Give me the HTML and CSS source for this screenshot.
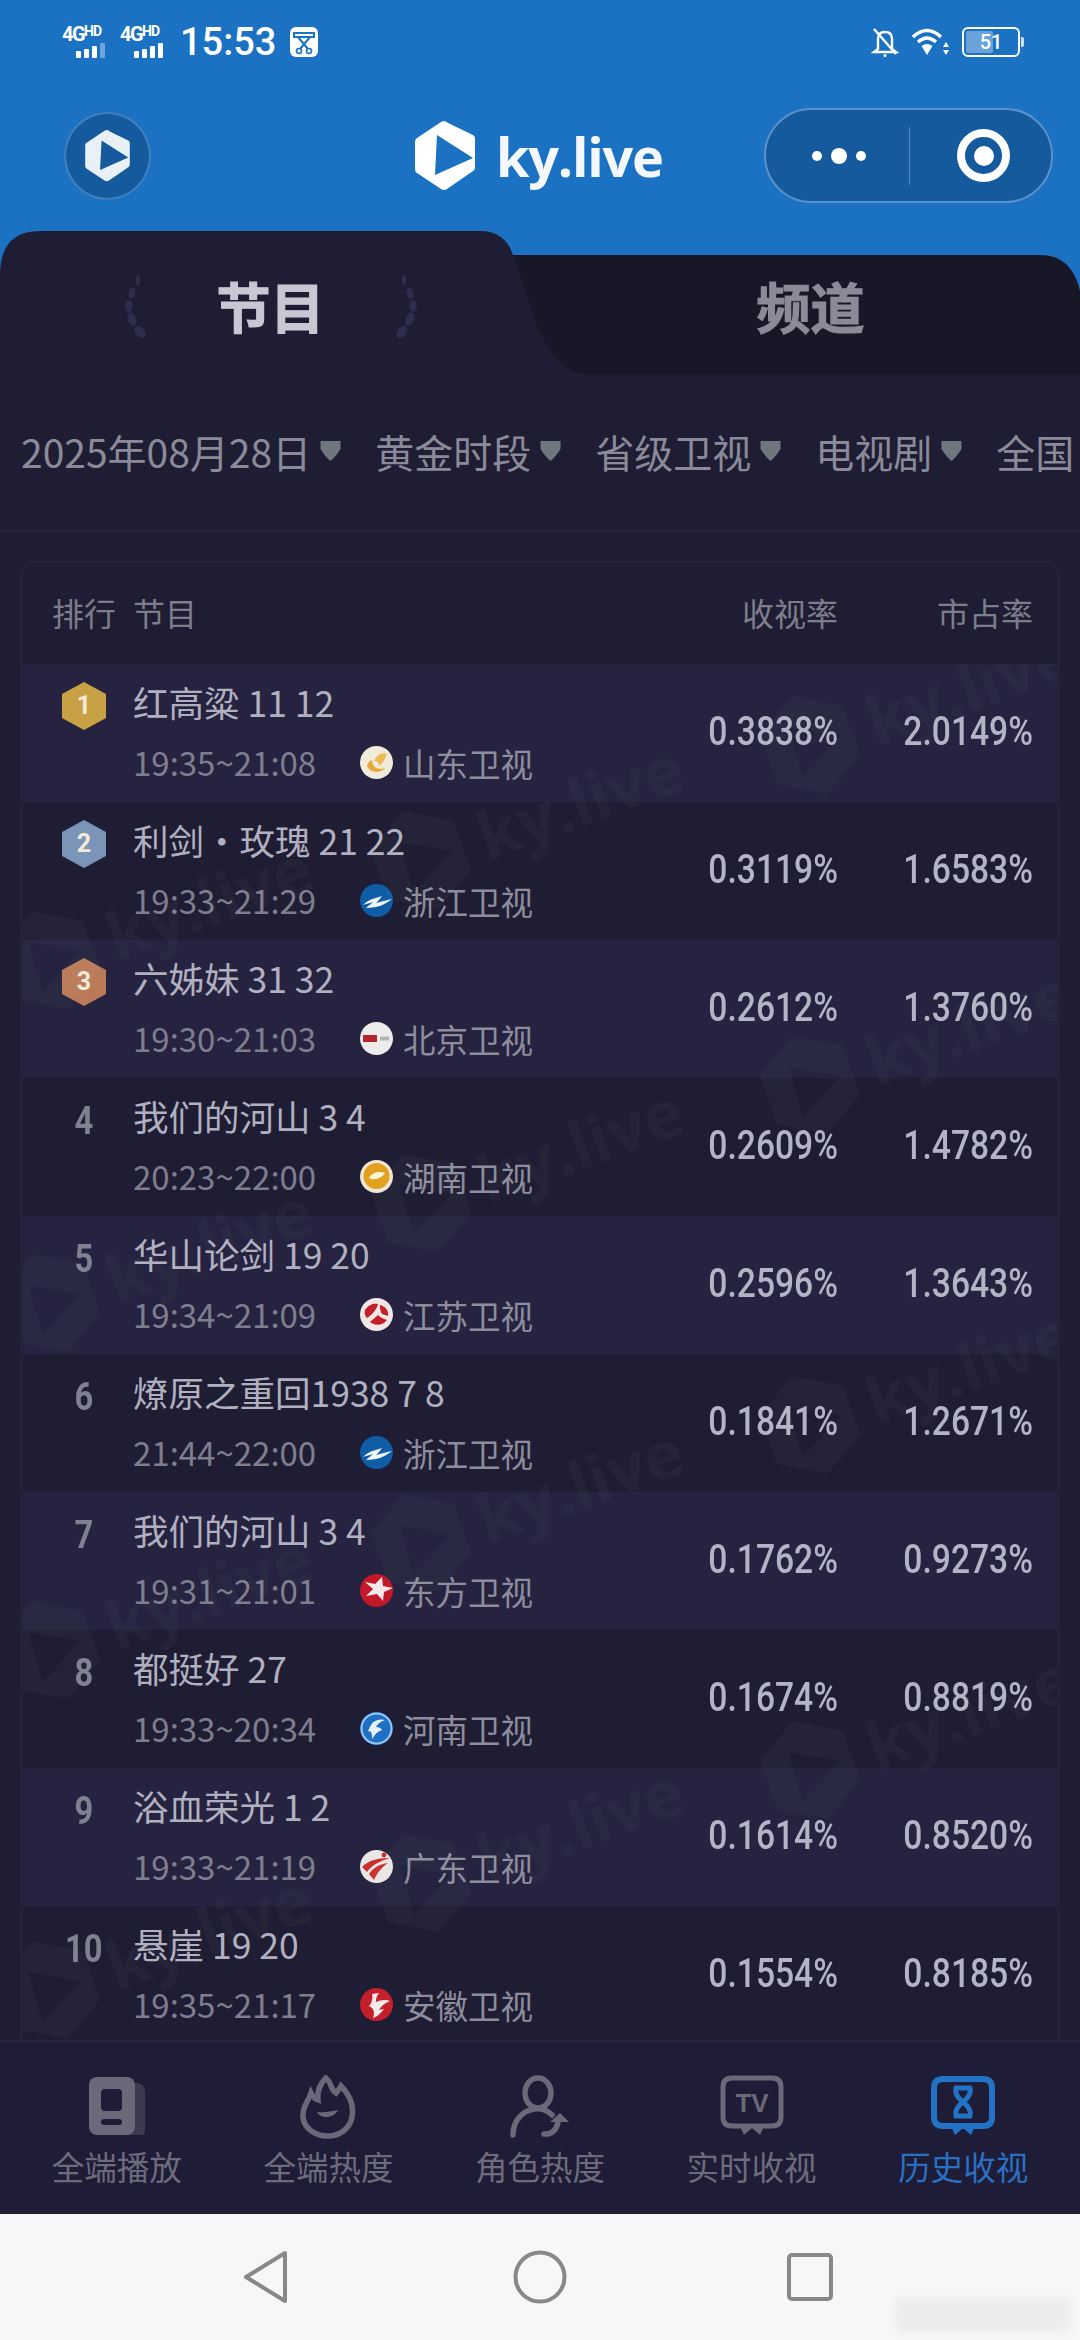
FILE: index.html
```html
<!DOCTYPE html>
<html lang="zh-CN">
<head>
<meta charset="utf-8">
<title>ky.live</title>
<link rel="stylesheet" href="styles.css">
</head>
<body>
<svg class="defs" width="0" height="0">
  <defs>
    <symbol id="hexlogo" viewBox="0 0 60 70">
      <path fill-rule="evenodd" d="M29 0Q31 0 33 2L58 14Q60 15 60 18V46Q60 49 58 50L32 68Q29 70 26 68L2 52Q0 51 0 48V21Q0 18 2 17L26 1Q28 0 29 0ZM22 14L20 54L58 37Z"/>
    </symbol>
    <symbol id="shandong" viewBox="0 0 33 33"><circle cx="16.5" cy="16.5" r="16.5" fill="#f1ebdc"/><path d="M7 20C10 27 20 28 25 22C19 24 13 23 12 14C10 15 7 17 7 20Z" fill="#e9a93a"/><path d="M14 15C17 8 23 6 27 8C25 12 24 17 19 20C19 16 17 15 14 15Z" fill="#eebc55"/></symbol>
    <symbol id="zhejiang" viewBox="0 0 33 33"><circle cx="16.5" cy="16.5" r="16.5" fill="#0f5da6"/><path d="M3 21C9 15 16 14 22 12C20 15 18 17 16 19C21 18 26 16 32 15C26 20 18 24 6 24C9 21 11 20 13 18C10 19 6 20 3 21Z" fill="#eef5fb"/></symbol>
    <symbol id="beijing" viewBox="0 0 33 33"><circle cx="16.5" cy="16.5" r="16.5" fill="#ececec"/><rect x="3" y="13" width="14" height="7" fill="#b8242c"/><rect x="20" y="14.5" width="9" height="4" fill="#b5b5b5"/></symbol>
    <symbol id="hunan" viewBox="0 0 33 33"><circle cx="16.5" cy="16.5" r="16.5" fill="#efe7d6"/><circle cx="16.5" cy="16" r="13" fill="#e2a11d"/><path d="M9 18C12 12 20 11 25 13C22 18 14 21 9 18Z" fill="#fff3d8"/></symbol>
    <symbol id="jiangsu" viewBox="0 0 33 33"><circle cx="16.5" cy="16.5" r="16.5" fill="#f0e6e6"/><path d="M5 12C9 6 14 5 18 6C17 11 12 17 7 20C5 18 4 15 5 12Z" fill="#c4202a"/><path d="M20 7C25 8 29 13 28 18L22 16C20 13 20 10 20 7Z" fill="#c4202a"/><path d="M10 24C13 21 16 19 18 17C21 20 24 21 27 22C22 28 15 28 10 24Z" fill="#c4202a"/></symbol>
    <symbol id="dongfang" viewBox="0 0 33 33"><circle cx="16.5" cy="16.5" r="16.5" fill="#c2182a"/><path d="M22 3L23 12L33 14L24 18L23 27L17 20L6 22L13 15L5 8L15 10Z" fill="#f3e9ea"/></symbol>
    <symbol id="henan" viewBox="0 0 33 33"><circle cx="16.5" cy="16.5" r="16.5" fill="#1f6fc4"/><circle cx="16.5" cy="16.5" r="15" fill="none" stroke="#9cc7ee" stroke-width="2"/><path d="M10 15C12 9 19 6 25 8C20 10 17 12 16 15C19 15 21 16 22 18C18 19 15 22 12 27C12 22 12 19 8 19Z" fill="#e6f2fb"/></symbol>
    <symbol id="guangdong" viewBox="0 0 33 33"><circle cx="16.5" cy="16.5" r="16.5" fill="#ebe6e6"/><path d="M2 17C9 10 18 8 30 8C20 11 12 15 7 22Z" fill="#c9302c"/><path d="M9 24C14 17 20 14 28 13C22 17 17 23 14 30Z" fill="#c9302c"/><circle cx="24" cy="5" r="2.4" fill="#c9302c"/></symbol>
    <symbol id="anhui" viewBox="0 0 33 33"><circle cx="16.5" cy="16.5" r="16.5" fill="#c3202c"/><path d="M12 6L19 5C16 9 16 12 16 14C20 12 26 11 30 13C25 15 21 18 19 22L24 21C21 25 17 29 13 30C15 25 14 20 9 18C12 15 13 10 12 6Z" fill="#f5eaea"/></symbol>
    <symbol id="rank" viewBox="0 0 44 48"><path d="M22 0L44 12V36L22 48L0 36V12Z"/></symbol>
    <symbol id="caret" viewBox="0 0 20 20"><path d="M0 0H20V8Q15 16 10 20Q5 16 0 8Z"/></symbol>
    <g id="wm">
      <path fill-rule="evenodd" d="M0 -52L44 -26V26L0 52L-44 26V-26ZM-14 -24L-18 28L32 2Z"/>
      <text x="62" y="24">ky.live</text>
    </g>
    <g id="leaves"><ellipse cx="13" cy="6" rx="2.200" ry="6"/><ellipse cx="7" cy="19" rx="3.200" ry="6" transform="rotate(12 7 19)"/><ellipse cx="4" cy="32" rx="3.800" ry="6"/><ellipse cx="7" cy="45" rx="4.200" ry="7" transform="rotate(-22 7 45)"/><ellipse cx="15" cy="58" rx="4.500" ry="7" transform="rotate(-40 15 58)"/></g>
  </defs>
</svg>

<div class="phone">
  <header class="top">
    <div class="status">
      <div class="net"><span class="net-t">4G<sup>HD</sup></span><span class="bars"><i></i><i></i><i></i><i class="off"></i></span></div>
      <div class="net"><span class="net-t">4G<sup>HD</sup></span><span class="bars"><i></i><i></i><i></i><i></i></span></div>
      <span class="clock">15:53</span>
      <svg class="scis" viewBox="0 0 28 30"><rect width="28" height="30" rx="6" fill="#fff"/><rect x="4" y="6" width="20" height="4" fill="none" stroke="#1b71c2" stroke-width="2"/><path d="M8 10L18 22M20 10L10 22" stroke="#1b71c2" stroke-width="2"/><circle cx="9" cy="24" r="2.5" fill="none" stroke="#1b71c2" stroke-width="1.6"/><circle cx="19" cy="24" r="2.5" fill="none" stroke="#1b71c2" stroke-width="1.6"/></svg>
      <svg class="bell" viewBox="0 0 28 30" fill="none" stroke="#fff" stroke-width="2.4"><path d="M7 22V12Q7 5 14 5Q21 5 21 12V22L25 25H3Z"/><path d="M3 2L25 27"/><circle cx="14" cy="28.5" r="1.5" fill="#fff" stroke="none"/></svg>
      <svg class="wifi" viewBox="0 0 38 30" fill="none" stroke="#fff" stroke-width="3.4"><path d="M1 10Q15 -3 29 10"/><path d="M6 15Q15 7 24 15"/><path d="M15 28L9.5 19Q15 15 20.500 19Z" fill="#fff" stroke="none"/><path d="M34 15L37 20H31ZM34 28L31 23H37Z" fill="#fff" stroke="none"/></svg>
      <div class="batt"><div class="batt-fill"></div><span>51</span></div>
    </div>
    <div class="head">
      <div class="mini"><svg class="mini-logo"><use href="#hexlogo"/></svg></div>
      <div class="brand"><svg class="brand-logo"><use href="#hexlogo"/></svg><span>ky.live</span></div>
      <div class="capsule">
        <div class="dots"><i></i><i class="big"></i><i></i></div>
        <div class="target"></div>
      </div>
    </div>
  </header>

  <section class="tabs">
    <svg class="tab-bg" viewBox="0 0 1080 144" preserveAspectRatio="none">
      <rect width="1080" height="144" fill="#1b71c2"/>
      <path d="M400 24H1040Q1072 24 1080 60V144H400Z" fill="#181727"/>
      <path d="M0 144V40Q2 0 40 0H480Q505 0 513 24C526 60 535 96 544 108C554 130 570 144 592 144Z" fill="#1e1d33"/>
    </svg>
    <div class="tab tab-on">
      <svg class="laurel" viewBox="0 0 24 64"><use href="#leaves"/></svg>
      <span>节目</span>
      <svg class="laurel flip" viewBox="0 0 24 64"><use href="#leaves"/></svg>
    </div>
    <div class="tab tab-off"><span>频道</span></div>
  </section>

  <main class="main">
    <div class="filters">
      <div class="filter"><span>2025年08月28日</span><svg class="caret"><use href="#caret"/></svg></div>
      <div class="filter"><span>黄金时段</span><svg class="caret"><use href="#caret"/></svg></div>
      <div class="filter"><span>省级卫视</span><svg class="caret"><use href="#caret"/></svg></div>
      <div class="filter"><span>电视剧</span><svg class="caret"><use href="#caret"/></svg></div>
      <div class="filter"><span>全国</span><svg class="caret"><use href="#caret"/></svg></div>
    </div>
    <div class="card">
      <div class="thead"><span class="th-rank">排行</span><span class="th-name">节目</span><span class="th-num">收视率</span><span class="th-num">市占率</span></div>

      <div class="row odd"><div class="rank"><div class="badge gold"><svg><use href="#rank"/></svg><span>1</span></div></div><div class="info"><div class="title">红高粱 11 12</div><div class="meta"><span class="time">19:35~21:08</span><svg class="chlogo"><use href="#shandong"/></svg><span class="ch">山东卫视</span></div></div><div class="num">0.3838%</div><div class="num">2.0149%</div></div>
      <div class="row"><div class="rank"><div class="badge silver"><svg><use href="#rank"/></svg><span>2</span></div></div><div class="info"><div class="title">利剑・玫瑰 21 22</div><div class="meta"><span class="time">19:33~21:29</span><svg class="chlogo"><use href="#zhejiang"/></svg><span class="ch">浙江卫视</span></div></div><div class="num">0.3119%</div><div class="num">1.6583%</div></div>
      <div class="row odd"><div class="rank"><div class="badge copper"><svg><use href="#rank"/></svg><span>3</span></div></div><div class="info"><div class="title">六姊妹 31 32</div><div class="meta"><span class="time">19:30~21:03</span><svg class="chlogo"><use href="#beijing"/></svg><span class="ch">北京卫视</span></div></div><div class="num">0.2612%</div><div class="num">1.3760%</div></div>
      <div class="row"><div class="rank"><span class="rn">4</span></div><div class="info"><div class="title">我们的河山 3 4</div><div class="meta"><span class="time">20:23~22:00</span><svg class="chlogo"><use href="#hunan"/></svg><span class="ch">湖南卫视</span></div></div><div class="num">0.2609%</div><div class="num">1.4782%</div></div>
      <div class="row odd"><div class="rank"><span class="rn">5</span></div><div class="info"><div class="title">华山论剑 19 20</div><div class="meta"><span class="time">19:34~21:09</span><svg class="chlogo"><use href="#jiangsu"/></svg><span class="ch">江苏卫视</span></div></div><div class="num">0.2596%</div><div class="num">1.3643%</div></div>
      <div class="row"><div class="rank"><span class="rn">6</span></div><div class="info"><div class="title">燎原之重回1938 7 8</div><div class="meta"><span class="time">21:44~22:00</span><svg class="chlogo"><use href="#zhejiang"/></svg><span class="ch">浙江卫视</span></div></div><div class="num">0.1841%</div><div class="num">1.2671%</div></div>
      <div class="row odd"><div class="rank"><span class="rn">7</span></div><div class="info"><div class="title">我们的河山 3 4</div><div class="meta"><span class="time">19:31~21:01</span><svg class="chlogo"><use href="#dongfang"/></svg><span class="ch">东方卫视</span></div></div><div class="num">0.1762%</div><div class="num">0.9273%</div></div>
      <div class="row"><div class="rank"><span class="rn">8</span></div><div class="info"><div class="title">都挺好 27</div><div class="meta"><span class="time">19:33~20:34</span><svg class="chlogo"><use href="#henan"/></svg><span class="ch">河南卫视</span></div></div><div class="num">0.1674%</div><div class="num">0.8819%</div></div>
      <div class="row odd"><div class="rank"><span class="rn">9</span></div><div class="info"><div class="title">浴血荣光 1 2</div><div class="meta"><span class="time">19:33~21:19</span><svg class="chlogo"><use href="#guangdong"/></svg><span class="ch">广东卫视</span></div></div><div class="num">0.1614%</div><div class="num">0.8520%</div></div>
      <div class="row"><div class="rank"><span class="rn">10</span></div><div class="info"><div class="title">悬崖 19 20</div><div class="meta"><span class="time">19:35~21:17</span><svg class="chlogo"><use href="#anhui"/></svg><span class="ch">安徽卫视</span></div></div><div class="num">0.1554%</div><div class="num">0.8185%</div></div>

      <svg class="marks" viewBox="23 664 1034 1380">
        <g class="mark-g">
          <use href="#wm" transform="translate(810 745) rotate(-20)"/>
          <use href="#wm" transform="translate(810 1085) rotate(-20)"/>
          <use href="#wm" transform="translate(810 1425) rotate(-20)"/>
          <use href="#wm" transform="translate(810 1770) rotate(-20)"/>
          <use href="#wm" transform="translate(421 860) rotate(-20)"/>
          <use href="#wm" transform="translate(421 1203) rotate(-20)"/>
          <use href="#wm" transform="translate(421 1543) rotate(-20)"/>
          <use href="#wm" transform="translate(421 1883) rotate(-20)"/>
          <use href="#wm" transform="translate(50 960) rotate(-20)"/>
          <use href="#wm" transform="translate(50 1303) rotate(-20)"/>
          <use href="#wm" transform="translate(50 1650) rotate(-20)"/>
          <use href="#wm" transform="translate(50 1990) rotate(-20)"/>
        </g>
      </svg>
    </div>
  </main>

  <nav class="tabbar">
    <div class="item">
      <svg class="ico" viewBox="0 0 64 64"><path d="M40 8H52Q60 8 60 18V56Q60 60 56 60H40Z" fill="#3b3a50"/><rect x="4" y="2" width="46" height="58" rx="8" fill="#696979"/><rect x="16" y="14" width="21" height="22" rx="4" fill="#1e1c36"/><rect x="16" y="44" width="21" height="6" rx="3" fill="#1e1c36"/></svg>
      <span>全端播放</span>
    </div>
    <div class="item">
      <svg class="ico" viewBox="0 0 64 64" fill="none" stroke="#696979" stroke-width="5.500"><path d="M30 3C36 8 34 14 40 18C43 14 44 13 45 11C54 20 58 31 56 42C54 54 43 61 32 61C20 61 8 54 7 42C6 32 12 27 15 18C17 22 19 24 22 25C21 17 24 9 30 3Z"/><path d="M21 37C24 44 38 44 42 35C38 36 26 38 21 37Z" fill="#696979" stroke="none"/></svg>
      <span>全端热度</span>
    </div>
    <div class="item">
      <svg class="ico" viewBox="0 0 64 64" fill="none" stroke="#696979" stroke-width="5.500" stroke-linecap="round"><ellipse cx="30" cy="18" rx="13" ry="15"/><path d="M5 60C5 46 14 36 26 34C34 33 40 36 44 40"/><path d="M36 59C44 60 49 54 50 47"/><path d="M42 47L52 38L61 47Z" fill="#696979" stroke="none"/></svg>
      <span>角色热度</span>
    </div>
    <div class="item">
      <svg class="ico" viewBox="0 0 64 64" fill="none" stroke="#696979" stroke-width="5"><path d="M12 3H52Q61 3 61 12V42Q61 51 52 51H12Q3 51 3 42V12Q3 3 12 3Z"/><path d="M19 49L24 60L32 53L40 60L45 49Z" fill="#696979" stroke="none"/><text class="tv-t" x="32" y="37" text-anchor="middle">TV</text></svg>
      <span>实时收视</span>
    </div>
    <div class="item active">
      <svg class="ico" viewBox="0 0 64 64" fill="none" stroke="#2272c5" stroke-width="6"><path d="M12 4H52Q61 4 61 13V42Q61 51 52 51H12Q3 51 3 42V13Q3 4 12 4Z"/><path d="M19 49L24 60L32 53L40 60L45 49Z" fill="#2272c5" stroke="none"/><path d="M25 13H39Q41 20 32 27Q41 34 39 41H25Q23 34 32 27Q23 20 25 13Z" stroke-width="5"/></svg>
      <span>历史收视</span>
    </div>
  </nav>

  <footer class="sysnav">
    <svg class="sys sys-back" viewBox="0 0 46 54"><path d="M42 3V51L3 27Z" fill="none" stroke="#888" stroke-width="4" stroke-linejoin="round"/></svg>
    <svg class="sys sys-home" viewBox="0 0 54 54"><circle cx="27" cy="27" r="24.500" fill="none" stroke="#888" stroke-width="4"/></svg>
    <svg class="sys sys-recent" viewBox="0 0 46 48"><rect x="2" y="2" width="42" height="44" rx="3" fill="none" stroke="#888" stroke-width="4"/></svg>
    <div class="smudge"></div>
  </footer>
</div>
</body>
</html>
```

FILE: styles.css
```css
* { box-sizing: border-box; }
html, body { margin: 0; padding: 0; }
body {
  width: 1080px;
  height: 2340px;
  overflow: hidden;
  background: #1e1d33;
  font-family: "Noto Sans CJK SC", "Noto Sans", sans-serif;
}
.defs { position: absolute; }
.phone { width: 1080px; height: 2340px; display: flex; flex-direction: column; }

/* blue header */
.top { height: 231px; background: #1b71c2; color: #fff; }
.status { height: 84px; display: flex; align-items: center; padding: 0 60px 0 62px; }
.net { width: 46px; margin-right: 12px; display: flex; flex-direction: column; align-items: flex-start; }
.net-t { font: 700 20px/17px Roboto, sans-serif; letter-spacing: -1.5px; white-space: nowrap; }
.net-t sup { font-size: 14px; line-height: 0; vertical-align: 5px; letter-spacing: -1px; }
.bars { display: flex; align-items: flex-end; gap: 3px; height: 15px; margin-left: 14px; }
.bars i { width: 5px; background: #fff; border-radius: 1px; }
.bars i:nth-child(1) { height: 7px; }
.bars i:nth-child(2) { height: 9px; }
.bars i:nth-child(3) { height: 12px; }
.bars i:nth-child(4) { height: 15px; }
.bars i.off { background: #6ea6dc; }
.clock { font: 500 38px/1 Roboto, sans-serif; margin-left: 2px; }
.scis { width: 28px; height: 30px; margin-left: 14px; margin-right: auto; }
.bell { width: 28px; height: 30px; }
.wifi { width: 38px; height: 30px; margin-left: 13px; }
.batt { position: relative; width: 58px; height: 30px; margin-left: 12px; border: 2.500px solid #fff; border-radius: 6px; display: flex; align-items: center; justify-content: center; font: 500 20px/1 Roboto, sans-serif; }
.batt::after { content: ""; position: absolute; right: -6px; top: 8px; width: 3px; height: 10px; background: #cfe2f4; border-radius: 0 2px 2px 0; }
.batt-fill { position: absolute; left: 2px; top: 2px; bottom: 2px; width: 27px; background: #6aa3da; border-radius: 2px; }
.batt span { position: relative; }

.head { height: 147px; display: flex; align-items: center; padding-left: 64px; padding-bottom: 4px; }
.mini { width: 87px; height: 88px; flex: none; border-radius: 50%; background: #155a9c; border: 2px solid #3f80bf; display: flex; align-items: center; justify-content: center; }
.mini-logo { width: 45px; height: 52px; fill: #e8f0f8; }
.brand { margin-left: 264px; width: 250px; flex: none; display: flex; align-items: center; gap: 21px; }
.brand-logo { width: 60px; height: 70px; flex: none; fill: #fff; }
.brand span { font: 700 54px/62px "Open Sans", sans-serif; letter-spacing: -1.2px; color: #f4f8fc; }
.capsule { margin-left: 99px; width: 289px; height: 95px; flex: none; border-radius: 48px; background: #155a9c; border: 2px solid #5a93cc; display: flex; align-items: center; }
.dots { width: 144px; height: 58px; padding-left: 2px; display: flex; align-items: center; justify-content: center; gap: 9px; border-right: 1px solid #4f8bc4; }
.dots i { width: 10px; height: 10px; border-radius: 50%; background: #fff; }
.dots i.big { width: 16px; height: 16px; }
.target { width: 53px; height: 53px; margin-left: 47px; border-radius: 50%; border: 8px solid #fff; display: flex; align-items: center; justify-content: center; }
.target::before { content: ""; width: 20px; height: 20px; border-radius: 50%; background: #fff; }

/* tabs */
.tabs { position: relative; height: 144px; flex: none; display: flex; font-weight: 700; font-size: 54px; line-height: 72px; }
.tab-bg { position: absolute; left: 0; top: 0; width: 1080px; height: 144px; }
.tab { position: relative; height: 150px; display: flex; align-items: center; justify-content: center; }
.tab-on { width: 541px; gap: 68px; color: #c7c8d4; -webkit-text-stroke: 1.2px #c7c8d4; }
.tab-off { flex: 1; color: #8b8b98; -webkit-text-stroke: 1.2px #8b8b98; }
.laurel { width: 24px; height: 64px; fill: #2e2d4d; }
.laurel.flip { transform: scaleX(-1); }

/* main */
.main { flex: 1; min-height: 0; overflow: hidden; display: flex; flex-direction: column; }
.filters { height: 157px; flex: none; border-bottom: 2px solid #232238; display: flex; align-items: center; padding: 0 0 4px 21px; gap: 34px; overflow: hidden; color: #8a8a99; font-size: 39px; white-space: nowrap; }
.filter { display: flex; align-items: center; gap: 9px; flex: none; }
.caret { width: 21px; height: 20px; fill: #6f767e; margin-top: 1px; }

.card { position: relative; margin: 28px 20px 0 20px; border: 3px solid #232239; border-radius: 16px 16px 0 0; flex: none; }
.thead { height: 101px; display: grid; grid-template-columns: 110px 1fr 195px 195px; padding-right: 24px; align-items: center; color: #7d7d8c; font-size: 32px; padding-bottom: 4px; }
.th-rank { padding-left: 29px; }
.th-num { text-align: right; }

.row { height: 138px; display: grid; grid-template-columns: 110px 1fr 195px 195px; padding-right: 24px; align-items: center; background: #1e1d33; }
.row.odd { background: #25233f; }
.rank { align-self: start; padding: 21px 0 0 12px; text-align: center; font: 700 38px/44px Roboto, sans-serif; color: #7f8191; }
.rn { display: inline-block; transform: scaleX(.86); }
.badge { position: relative; width: 44px; height: 48px; margin: -3px auto 0; display: flex; align-items: center; justify-content: center; font-size: 25px; color: #f2ead9; }
.badge svg { position: absolute; inset: 0; width: 44px; height: 48px; }
.badge span { position: relative; }
.gold svg { fill: #c9a145; }
.silver svg { fill: #7a95b8; }
.copper svg { fill: #ba7a57; }
.info { align-self: start; padding-top: 7px; white-space: nowrap; }
.title { height: 61px; font-size: 35.500px; line-height: 61px; color: #b0b0c0; }
.meta { height: 60px; display: flex; align-items: center; }
.time { width: 227px; flex: none; font-size: 33px; color: #7e7e8f; }
.chlogo { width: 33px; height: 33px; flex: none; margin-right: 10px; }
.ch { font-size: 32.500px; color: #8d8d9d; }
.num { text-align: right; font: 500 41px/1 Roboto, sans-serif; color: #b4b4c7; transform: scaleX(.82); transform-origin: right center; padding-bottom: 4px; }

.marks { position: absolute; left: 0; top: 101px; width: 1034px; height: 1380px; pointer-events: none; fill: rgba(255,255,255,.028); }
.mark-g { font: 700 66px "Open Sans", sans-serif; }

/* bottom tab bar */
.tabbar { height: 174px; flex: none; background: #1e1c36; border-top: 2px solid #25243c; padding: 33px 11px 0; display: flex; position: relative; }
.item { flex: 1; display: flex; flex-direction: column; align-items: center; gap: 5px; color: #6d6c7c; font-size: 32.500px; line-height: 44px; }
.item.active { color: #2a70c2; }
.ico { width: 64px; height: 64px; flex: none; }
.tv-t { font: 700 26px "Liberation Sans", sans-serif; fill: #696979; stroke: none; }

/* system nav */
.sysnav { position: relative; height: 126px; flex: none; background: #f7f7f7; display: flex; align-items: center; padding-left: 243px; }
.sys { flex: none; height: 54px; }
.sys-back { width: 46px; }
.sys-home { width: 54px; margin-left: 224px; }
.sys-recent { width: 46px; height: 48px; margin-left: 220px; }
.smudge { position: absolute; left: 895px; top: 84px; width: 175px; height: 34px; background: #eaeaea; filter: blur(4px); opacity: .8; }
```
